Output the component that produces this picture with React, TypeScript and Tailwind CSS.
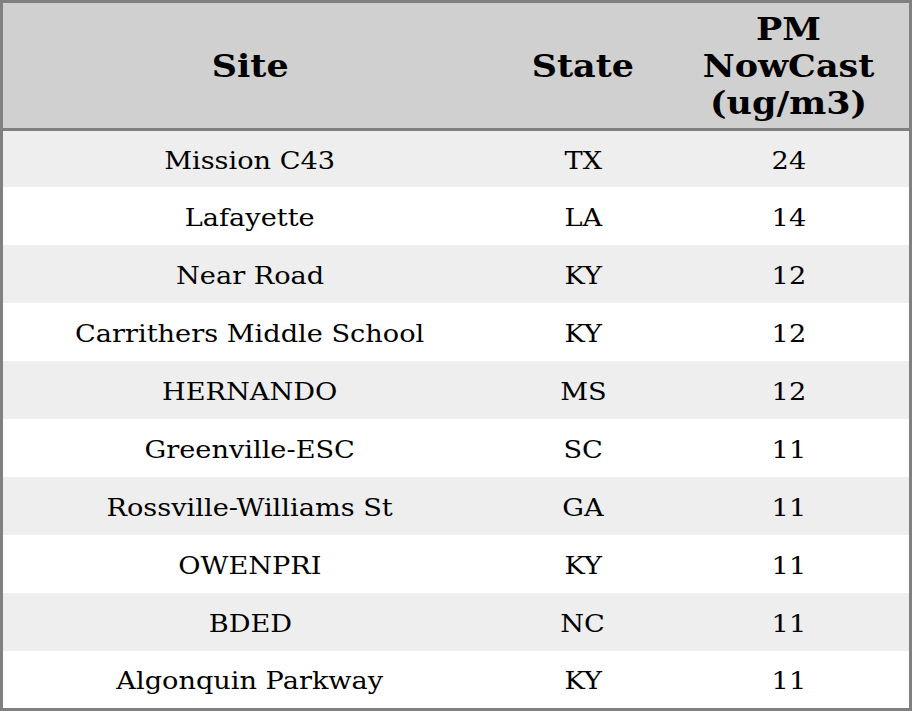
import React from "react";

const rows: [string, string, string][] = [
  ["Mission C43", "TX", "24"],
  ["Lafayette", "LA", "14"],
  ["Near Road", "KY", "12"],
  ["Carrithers Middle School", "KY", "12"],
  ["HERNANDO", "MS", "12"],
  ["Greenville-ESC", "SC", "11"],
  ["Rossville-Williams St", "GA", "11"],
  ["OWENPRI", "KY", "11"],
  ["BDED", "NC", "11"],
  ["Algonquin Parkway", "KY", "11"],
];

function Cell({ children }: { children: React.ReactNode }) {
  return (
    <div className="pt-[3px]">
      <span className="inline-block scale-x-[1.087]">{children}</span>
    </div>
  );
}

export default function App() {
  return (
    <div className="w-[912px] h-[711px] bg-white font-['DejaVu_Serif',serif] text-black">
      <div className="border-[3px] border-[#808080] w-[912px] h-[711px] flex flex-col">
        <div className="grid grid-cols-[494px_172px_240px] h-[125px] bg-[#d0d0d0] items-center text-center font-bold text-[32px] leading-[37px] border-b-[3px] border-[#808080] box-content">
          <div className="pt-[2px]">
            <span className="inline-block scale-x-[1.092]">Site</span>
          </div>
          <div className="pt-[2px]">
            <span className="inline-block scale-x-[1.092]">State</span>
          </div>
          <div className="pt-[2px]">
            <span className="inline-block scale-x-[1.092]">
              PM
              <br />
              NowCast
              <br />
              (ug/m3)
            </span>
          </div>
        </div>
        {rows.map((r, i) => (
          <div
            key={i}
            className={
              "grid grid-cols-[494px_172px_240px] items-center text-center text-[25px] " +
              (i % 2 === 0 ? "bg-[#eeeeee] " : "bg-white ") +
              (i === 0 ? "h-[56px]" : i === 9 ? "h-[57px]" : "h-[58px]")
            }
          >
            <Cell>{r[0]}</Cell>
            <Cell>{r[1]}</Cell>
            <Cell>{r[2]}</Cell>
          </div>
        ))}
      </div>
    </div>
  );
}
